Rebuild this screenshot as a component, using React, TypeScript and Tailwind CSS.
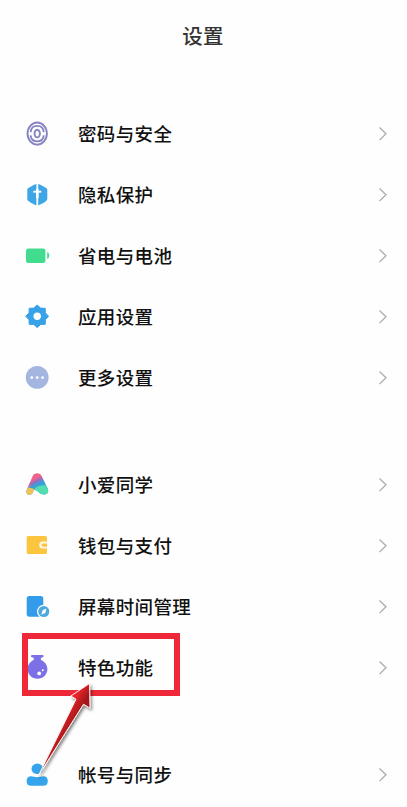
import React from 'react';

type IconName =
    | 'fingerprint'
    | 'shield'
    | 'battery'
    | 'gear'
    | 'more'
    | 'assistant'
    | 'wallet'
    | 'screenTime'
    | 'flask'
    | 'account';

interface SettingItem {
    icon: IconName;
    label: string;
}

const GROUPS: SettingItem[][] = [
    [
        { icon: 'fingerprint', label: '密码与安全' },
        { icon: 'shield', label: '隐私保护' },
        { icon: 'battery', label: '省电与电池' },
        { icon: 'gear', label: '应用设置' },
        { icon: 'more', label: '更多设置' },
    ],
    [
        { icon: 'assistant', label: '小爱同学' },
        { icon: 'wallet', label: '钱包与支付' },
        { icon: 'screenTime', label: '屏幕时间管理' },
        { icon: 'flask', label: '特色功能' },
    ],
    [{ icon: 'account', label: '帐号与同步' }],
];

const IconShape: React.FC<{ name: IconName }> = ({ name }) => {
    switch (name) {
        case 'fingerprint':
            return (
                <g fill="none" stroke="#8784c4" strokeWidth="1.9">
                    <ellipse cx="14.2" cy="13.6" rx="9.7" ry="11.1" />
                    <path d="M7.6 12.2C8 8.3 10.7 5.9 14.2 5.9s6.2 2.4 6.6 6.3M7.6 15.4c.4 3.7 3.1 6 6.6 6s6.2-2.3 6.6-6" />
                    <ellipse cx="14.2" cy="13.6" rx="2.7" ry="3.8" />
                </g>
            );
        case 'shield':
            return (
                <g>
                    <path
                        d="M13.4 2.9v21.4c-1.2 0-6.6-3.3-8-4.4-.8-.6-1.1-1.2-1.1-2.1V9.1c0-.9.3-1.5 1-2C6.9 6 12 2.9 13.4 2.9Z"
                        fill="#3ea6e6"
                    />
                    <path
                        d="M15.2 2.9v21.4c1.2 0 6.6-3.3 8-4.4.8-.6 1.1-1.2 1.1-2.1V9.100c0-.9-.3-1.500-1-2C21.700 6 16.600 2.900 15.200 2.900Z"
                        fill="#3ea6e6"
                    />
                    <path d="M10.300 10.700h8" stroke="#fff" strokeWidth="1.900" />
                    <path d="M14.300 8v9" stroke="#fff" strokeWidth="2.600" />
                </g>
            );
        case 'battery':
            return (
                <g fill="#42dc8e">
                    <rect x="3" y="6.600" width="19.400" height="14.400" rx="2.200" />
                    <path d="M24.200 10.200c1.400.2 2 1.200 2 3.300s-.6 3.100-2 3.300Z" />
                </g>
            );
        case 'gear':
            return (
                <g>
                    <path
                        d="M14.200 2 17.600 5.100 22.200 5.300 22.400 9.900 25.600 13.300 22.400 16.700 22.200 21.300 17.600 21.500 14.200 24.600 10.800 21.500 6.200 21.300 6 16.700 2.800 13.300 6 9.900 6.200 5.300 10.800 5.100Z"
                        fill="#37a2e8"
                        stroke="#37a2e8"
                        strokeWidth="1"
                        strokeLinejoin="round"
                    />
                    <circle cx="14.200" cy="13.300" r="3.700" fill="#fff" />
                </g>
            );
        case 'more':
            return (
                <g>
                    <circle cx="14.200" cy="13.400" r="11.400" fill="#a4b6df" />
                    <g fill="#fff">
                        <circle cx="8.800" cy="13.600" r="1.400" />
                        <circle cx="14.200" cy="13.600" r="1.400" />
                        <circle cx="19.600" cy="13.600" r="1.400" />
                    </g>
                </g>
            );
        case 'assistant':
            return (
                <g>
                    <defs>
                        <clipPath id="assistant-clip">
                            <path d="M14.300 2.200c2.100 0 3.400 1 4.300 2.700l6.100 12.500c1.500 3.400-.4 6.200-3.600 6.200-2.900 0-4.900-1.700-6.900-3.600-1.700-1.500-3.300-1.500-4 .5-.7 2-1.600 3.300-3.500 3.300-2.600 0-4-2.200-3-4.800L9.700 5c.9-1.900 2.400-2.800 4.600-2.800Z" />
                        </clipPath>
                        <linearGradient id="assistant-top" x1="10" y1="3" x2="17" y2="17" gradientUnits="userSpaceOnUse">
                            <stop offset="0.3" stopColor="#f0648c" />
                            <stop offset="0.5" stopColor="#a268bd" />
                            <stop offset="0.700" stopColor="#399fd9" />
                        </linearGradient>
                    </defs>
                    <g clipPath="url(#assistant-clip)">
                        <rect width="28" height="28" fill="url(#assistant-top)" />
                        <path d="M12 17c4-3 8-3.500 15-2v13H12Z" fill="#52dcaf" />
                        <path d="M0 17.500c5-2 7-1 11.500.5L9 28H0Z" fill="#efc354" />
                        <path d="M0 17c3.500-1.500 5.500-1.800 8-1L5 11H0Z" fill="#ee7187" />
                    </g>
                </g>
            );
        case 'wallet':
            return (
                <g>
                    <rect x="3.700" y="3.900" width="20.300" height="18.200" rx="1.500" fill="#fbc540" />
                    <path d="M24.500 9.400h-4.700a3.600 3.600 0 0 0 0 7.200h4.700Z" fill="#fff8e5" />
                    <path d="M24 11.400h-3.800a1.700 1.700 0 0 0 0 3.400H24Z" fill="#fbc540" />
                </g>
            );
        case 'screenTime':
            return (
                <g>
                    <rect x="3.700" y="3.100" width="16.600" height="20.600" rx="2.600" fill="#329ceb" />
                    <circle cx="20.800" cy="18.500" r="6.800" fill="#fff" />
                    <circle cx="20.800" cy="18.500" r="5.500" fill="#4ba9df" />
                    <path d="m23.400 15.400-1.100 4.600-4 1.800 1.300-4.600Z" fill="#fff" />
                </g>
            );
        case 'flask':
            return (
                <g>
                    <path
                        d="M9.100 1h10.400c1.200 0 1.600 1.400.6 1.900l-2.200 1.100v1.900c3.800 1.400 6.500 4.900 6.500 9.100 0 5.500-4.400 9.800-9.900 9.800S4.600 20.500 4.600 15c0-4.200 2.600-7.700 6.200-9.100V4L8.500 2.900C7.500 2.400 7.900 1 9.100 1Z"
                        fill="#7c70e7"
                    />
                    <circle cx="16.200" cy="19.400" r="1.900" fill="#fff" />
                    <circle cx="19.800" cy="16.200" r="1" fill="#fff" />
                </g>
            );
        case 'account':
            return (
                <g fill="#35a4ed">
                    <ellipse cx="14.300" cy="7.800" rx="5.800" ry="5.300" />
                    <path d="M8 15.200c2.200 0 3.800 1 6.300 1s4.100-1 6.300-1c2.700 0 4.200 1.900 4.200 4.700 0 3.200-1.600 4.900-4.500 4.900H8.100c-2.900 0-4.500-1.700-4.500-4.900 0-2.800 1.700-4.700 4.400-4.700Z" />
                </g>
            );
        default:
            return null;
    }
};

const SettingRow: React.FC<{ item: SettingItem }> = ({ item }) => (
    <div className="flex h-[61px] items-center pl-[23px] pr-[20px]">
        <svg className="h-7 w-7 shrink-0" viewBox="0 0 28 28">
            <IconShape name={item.icon} />
        </svg>
        <span className="mb-[2px] ml-[27px] flex-1 whitespace-nowrap text-[18.5px] font-medium leading-7 tracking-[0.35px] text-[#111]">
            {item.label}
        </span>
        <svg className="h-4 w-2 shrink-0" viewBox="0 0 8 16" fill="none">
            <path d="m.5 1.500 6.500 6.300-6.500 6.300" stroke="#acacac" strokeWidth="1.300" />
        </svg>
    </div>
);

// Red frame around the highlighted row, with the arrow that points at it
const Callout: React.FC = () => (
    <>
        <div className="absolute left-[22px] top-[633px] h-[63px] w-[158px] border-6 border-[#ee2838]" />
        <svg className="absolute left-[30px] top-[675px] h-[110px] w-[80px]" viewBox="30 675 80 110">
            <defs>
                <linearGradient id="arrow-fill" x1="60" y1="720" x2="70" y2="726" gradientUnits="userSpaceOnUse">
                    <stop offset="0" stopColor="#f1262c" />
                    <stop offset="1" stopColor="#a5181c" />
                </linearGradient>
                <filter id="arrow-shadow" x="-30%" y="-20%" width="170%" height="150%">
                    <feDropShadow dx="1.500" dy="2" stdDeviation="1.500" floodColor="#000" floodOpacity="0.500" />
                </filter>
            </defs>
            <path
                d="M89.500 683.500 70.800 696l5.200 3.200L38.500 775.500 83.500 704.200l6.500 4Z"
                fill="url(#arrow-fill)"
                stroke="#fff1ec"
                strokeWidth="1"
                strokeLinejoin="round"
                filter="url(#arrow-shadow)"
            />
        </svg>
    </>
);

export default function App() {
    return (
        <div className="relative h-[807px] w-[407px] overflow-hidden bg-[#fefefe] font-['Noto_Sans_CJK_SC',sans-serif]">
            <header className="flex h-[71px] items-center justify-center pb-[2px] pr-[1px]">
                <h1 className="text-[20.5px] font-medium leading-7 tracking-[0.2px] text-[#333]">设置</h1>
            </header>
            <main className="flex flex-col gap-[46px] pt-8">
                {GROUPS.map((group) => (
                    <section key={group[0].icon}>
                        {group.map((item) => (
                            <SettingRow key={item.icon} item={item} />
                        ))}
                    </section>
                ))}
            </main>
            <Callout />
        </div>
    );
}
